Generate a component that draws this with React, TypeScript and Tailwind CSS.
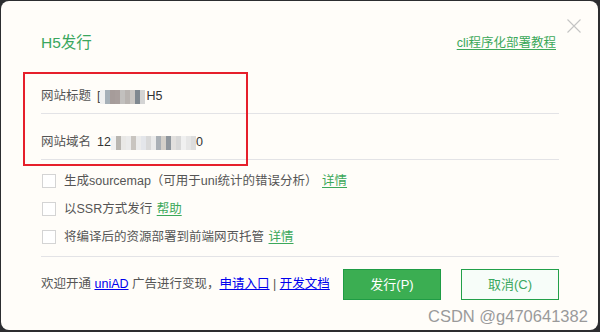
import { useState } from 'react'

const font = { fontFamily: '"Liberation Sans", "Noto Sans CJK SC", sans-serif' }

function Pixelated({ colors }: { colors: string[] }) {
  // mosaic blocks that hide the private part of a value
  return (
    <span className="inline-flex h-[14px] items-stretch">
      {colors.map((c, i) => (
        <span key={i} className="w-[5px]" style={{ background: c }} />
      ))}
    </span>
  )
}

function Checkbox({ label, link }: { label: string; link: string }) {
  const [checked, setChecked] = useState(false)
  return (
    <label className="flex h-[28px] items-center gap-[8px] cursor-pointer">
      <span
        onClick={() => setChecked(!checked)}
        className={`ml-[1px] h-[14px] w-[14px] border border-[#d4d4d4] ${checked ? 'bg-[#3bae52]' : 'bg-white'}`}
      />
      <span className="text-[12.5px] text-[#555]">
        {label} <a className="ml-[1px] text-[#3ca85a] underline underline-offset-2">{link}</a>
      </span>
    </label>
  )
}

export default function App() {
  return (
    <div className="h-[332px] w-[600px] overflow-hidden bg-[#2c2d30] pl-[1px] pt-[1px]" style={font}>
      <div className="relative h-[329px] w-[597px] rounded-[8px] bg-[#fffdf9] pl-[40px] pr-[39px] pt-[30px]">
        {/* close */}
        <svg className="absolute left-[566px] top-[18px]" width="14" height="14" viewBox="0 0 14 14">
          <path d="M0.5 0.5 L13.5 13.5 M13.5 0.5 L0.5 13.5" stroke="#c4c4c4" strokeWidth="1.1" fill="none" />
        </svg>

        {/* header */}
        <div className="flex h-[24px] items-center justify-between">
          <span className="text-[15.5px] text-[#3aa75e]">H5发行</span>
          <a className="mr-[3px] text-[12.5px] text-[#3ca85a] underline underline-offset-2">cli程序化部署教程</a>
        </div>

        <div className="mt-[13px]">
          <div className="flex h-[46px] items-center border-b border-[#e3e3e6] pt-[12px] text-[12.5px]">
            <span className="w-[56px] text-[#555]">网站标题</span>
            <span className="text-[#444]">[</span>
            <Pixelated colors={['#f0f0f0', '#a6b0b8', '#a69c9a', '#a89e9c', '#c2c0be', '#b8b3b0', '#c9c6c3', '#7f8890', '#d4d4d4']} />
            <span className="ml-[1px] text-[#333]">H5</span>
          </div>
          <div className="flex h-[46px] items-center border-b border-[#e3e3e6] pt-[12px] text-[12.5px]">
            <span className="w-[56px] text-[#555]">网站域名</span>
            <span className="text-[#333]">12</span>
            <Pixelated
              colors={['#f2f2f2', '#b9b6b1', '#e9e8e6', '#ebebeb', '#c9c5c0', '#ececec', '#e4e6ea', '#d9d9d9', '#ebebeb', '#aab0b6', '#d4d0ca', '#8f969d', '#e2e0de', '#d8d8d8', '#f0f0f0', '#e6e6e6', '#dddddd']}
            />
            <span className="text-[#333]">0</span>
          </div>
        </div>

        <div className="mt-[7px]">
          <Checkbox label="生成sourcemap（可用于uni统计的错误分析）" link="详情" />
          <Checkbox label="以SSR方式发行" link="帮助" />
          <Checkbox label="将编译后的资源部署到前端网页托管" link="详情" />
        </div>

        <div className="mt-[5px] h-px bg-[#e3e3e6]" />

        <div className="mt-[12px] flex h-[31px] items-center justify-between">
          <div className="text-[12.5px] text-[#555]">
            欢迎开通 <a className="text-[#0000ee] underline">uniAD</a> 广告进行变现，
            <a className="text-[#0000ee] underline">申请入口</a> | <a className="text-[#0000ee] underline">开发文档</a>
          </div>
          <div className="flex gap-[20px]">
            <button className="h-[31px] w-[98px] border border-[#1f9c45] bg-[#3bae52] text-[13px] text-white">发行(P)</button>
            <button className="h-[31px] w-[98px] border border-[#22a04a] bg-[#f7fdf9] text-[13px] text-[#3aa75e]">取消(C)</button>
          </div>
        </div>

        {/* annotation box */}
        <div className="absolute left-[22px] top-[71px] h-[94px] w-[225px] border-2 border-[#e61f2b]" />

        {/* watermark */}
        <div
          className="absolute left-[427px] top-[303px] whitespace-nowrap text-[16.5px] text-[#9a9a9a]"
          style={{ fontFamily: '"Liberation Sans", sans-serif', textShadow: '0 0 1px #fff' }}
        >
          CSDN @g470641382
        </div>
      </div>
    </div>
  )
}
